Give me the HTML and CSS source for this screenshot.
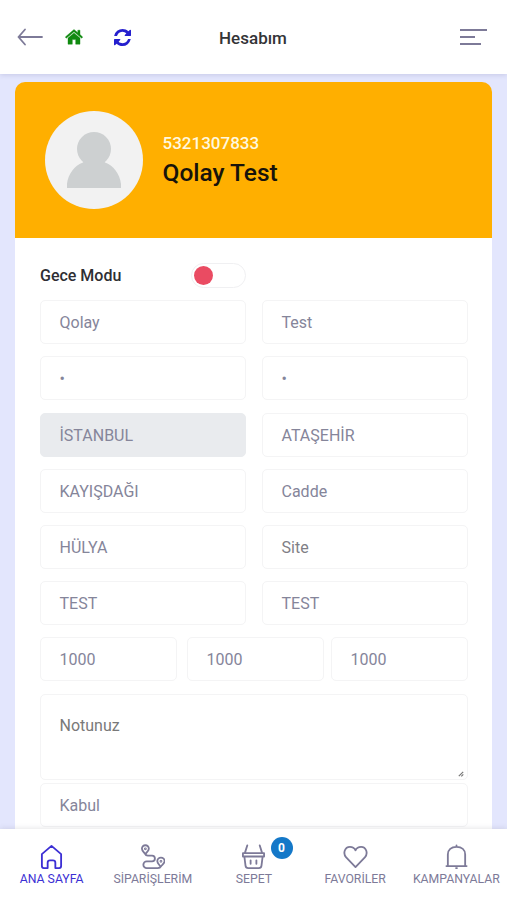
FILE: index.html
```html
<!DOCTYPE html>
<html lang="tr">
<head>
<meta charset="utf-8">
<meta name="viewport" content="width=device-width, initial-scale=1">
<title>Hesabım</title>
<link rel="stylesheet" href="styles.css">
</head>
<body>
<div class="app">
  <header class="topbar">
    <div class="topbar-actions">
      <svg class="icon-back" viewBox="0 0 26 18" fill="none" stroke="#7d7a98" stroke-width="1.800" stroke-linecap="round" stroke-linejoin="round"><path d="M25 9H1.500M8 1.500L1.500 9L8 16.500"/></svg>
      <svg class="icon-house" viewBox="0 0 18 16" fill="#108a10" stroke="#108a10" stroke-width=".4"><path d="M9 .5L.3 8l1 1.200L9 2.700l7.700 6.500 1-1.200-2.700-2.400V1.200h-2.200v2.500z"/><path d="M9 3.900L3 9v6.200h4.300v-4.600h3.400v4.600H15V9z"/></svg>
      <svg class="icon-sync" viewBox="0 0 1536 1536" fill="#251fce"><path d="M1511 928q0 5-1 7-64 268-268 434.500T764 1536q-146 0-282.500-55T238 1324l-129 129q-19 19-45 19t-45-19-19-45V960q0-26 19-45t45-19h448q26 0 45 19t19 45-19 45l-137 137q71 66 161 102t187 36q134 0 250-65t186-179q11-17 53-117 8-23 30-23h192q13 0 22.500 9.500t9.500 22.500zm25-800v448q0 26-19 45t-45 19h-448q-26 0-45-19t-19-45 19-45l138-138Q969 256 768 256q-134 0-250 65T332 500q-11 17-53 117-8 23-30 23H50q-13 0-22.500-9.500T18 608v-7q65-268 270-434.500T768 0q146 0 284 55.500T1297 212l130-129q19-19 45-19t45 19 19 45z"/></svg>
    </div>
    <h1 class="title">Hesabım</h1>
    <div class="menu"><i></i><i></i><i></i></div>
  </header>

  <main class="content">
    <section class="profile">
      <svg class="avatar" viewBox="0 0 98 98"><circle cx="49" cy="49" r="49" fill="#f2f2f2"/><circle cx="49" cy="38" r="17" fill="#cdd0d1"/><path d="M22 77V73C23 63 30 54 38 51.500L40 49H58L60 51.500C68 54 75 63 76 73V77Z" fill="#cdd0d1"/></svg>
      <div class="profile-text">
        <div class="phone">5321307833</div>
        <div class="name">Qolay Test</div>
      </div>
    </section>

    <section class="form">
      <div class="night"><span>Gece Modu</span><div class="switch"><i></i></div></div>
      <div class="pairs">
        <div class="field">Qolay</div><div class="field">Test</div>
        <div class="field">•</div><div class="field">•</div>
        <div class="field disabled">İSTANBUL</div><div class="field">ATAŞEHİR</div>
        <div class="field">KAYIŞDAĞI</div><div class="field">Cadde</div>
        <div class="field">HÜLYA</div><div class="field placeholder">Site</div>
        <div class="field">TEST</div><div class="field">TEST</div>
      </div>
      <div class="triple">
        <div class="field">1000</div><div class="field">1000</div><div class="field">1000</div>
      </div>
      <div class="note"><span>Notunuz</span><svg class="grip" viewBox="0 0 6 6" fill="none" stroke="#777" stroke-width="1.200"><path d="M.8 5.200L5.200.8M3.300 5.300L5.300 3.300"/></svg></div>
      <div class="field">Kabul</div>
    </section>
  </main>

  <nav class="tabs">
    <a class="tab active"><svg viewBox="0 0 26 26"><path d="M3 10.500L13 2L23 10.500V23Q23 25 21 25H17V19.500Q17 17 14.500 17H11.500Q9 17 9 19.500V25H5Q3 25 3 23Z"/></svg><span>ANA SAYFA</span></a>
    <a class="tab"><svg viewBox="0 0 26 26"><path d="M5.500 10.500C3.500 8 2 6.800 2 4.900a3.600 3.600 0 0 1 7.200 0C9.200 6.800 7.500 8 5.500 10.500ZM5.500 10.500Q6 12 8 12H12.500A3 3 0 0 1 12.500 18H7A3.500 3.500 0 0 0 7 25H18.500Q21 25 21.500 23.500C19.500 21 18 20 18 18a3.800 3.800 0 0 1 7.600 0C25.600 20 23.500 21 21.500 23.500"/><circle cx="5.600" cy="5" r=".5"/><circle cx="21.800" cy="18" r=".5"/></svg><span>SİPARİŞLERİM</span></a>
    <a class="tab"><svg viewBox="0 0 26 26"><path d="M2 9.500H24V13H2ZM3.500 13L4.700 22.500Q5 25 7.500 25H18.500Q21 25 21.300 22.500L22.500 13M6.500 1.500L4 9.500M19.500 1.500L22 9.500M10 17V20.500M16 17V20.500"/></svg><span>SEPET</span><b class="badge">0</b></a>
    <a class="tab"><svg viewBox="0 0 26 26"><path d="M13 24L3.300 14C-.5 9.500 2 3 7.200 3C10 3 12 4.500 13 6.500C14 4.500 16 3 18.800 3C24 3 26.500 9.500 22.700 14Z"/></svg><span>FAVORİLER</span></a>
    <a class="tab"><svg viewBox="0 0 26 26"><path d="M2.500 23H23.500M4 23V11C4 6 7.500 3 13 3C18.500 3 22 6 22 11V23M13 1.500V3M12.500 25H13.500"/></svg><span>KAMPANYALAR</span></a>
  </nav>
</div>
</body>
</html>
```
FILE: styles.css
```css
* { box-sizing: border-box; }
body {
  margin: 0;
  background: #e3e6fd;
  font-family: Roboto, "Liberation Sans", sans-serif;
}
svg { display: block; }
.app {
  height: 900px;
  display: flex;
  flex-direction: column;
  overflow: hidden;
}
.topbar {
  flex: none;
  height: 74px;
  padding: 0 20px 0 17px;
  display: grid;
  grid-template-columns: 1fr auto 1fr;
  align-items: center;
  background: #fff;
  box-shadow: 0 1px 5px rgba(70, 70, 130, .18);
}
.topbar-actions { display: flex; align-items: center; }
.icon-back { width: 26px; height: 18px; }
.icon-house { width: 18px; height: 16px; margin-left: 21.500px; }
.icon-sync { width: 17px; height: 17px; margin-left: 31px; }
.title {
  margin: 1px -1px 0 1px;
  color: #343437;
  font-size: 17px;
  line-height: 22px;
  font-weight: 500;
}
.menu { justify-self: end; width: 27px; display: grid; gap: 5px; }
.menu i { height: 2.300px; background: #7d7a98; }
.menu i:nth-child(2) { width: 15px; }
.menu i:nth-child(3) { width: 21px; }
.content { flex: 1; min-height: 0; margin: 7.500px 15px 0; overflow: hidden; }
.profile {
  height: 156.500px;
  padding-left: 30px;
  display: flex;
  align-items: center;
  gap: 19.500px;
  background: #ffaf00;
  border-radius: 10px 10px 0 0;
}
.avatar { width: 98px; height: 98px; }
.profile-text { padding-top: 2px; }
.phone { color: #fff8df; font-size: 17px; line-height: 24px; font-weight: 500; }
.name { color: #17130b; font-size: 24.500px; line-height: 36px; font-weight: 500; }
.form { height: 620px; padding: 24.500px 24px 0 25px; background: #fff; }
.night {
  height: 26px;
  display: flex;
  align-items: center;
  color: #2e2e33;
  font-size: 16px;
  font-weight: 500;
}
.night span { width: 150.500px; }
.switch {
  width: 55px;
  height: 25px;
  padding: 2px;
  border: 1px solid #f0f0f2;
  border-radius: 13px;
}
.switch i { display: block; width: 19px; height: 19px; border-radius: 50%; background: #ea4b62; }
.pairs {
  margin-top: 11.800px;
  display: grid;
  grid-template-columns: 206px 206px;
  justify-content: space-between;
  row-gap: 12.200px;
}
.field, .note {
  border: 1.500px solid #f4f4f5;
  border-radius: 5px;
  background: #fff;
  color: #85859a;
  font-size: 16px;
}
.field { height: 44px; padding: 0 18.500px; line-height: 44px; }
.disabled { background: #e9ebee; border-color: #e9ebee; }
.placeholder { color: #7f7f86; }
.triple { display: flex; margin-top: 12.200px; }
.triple .field { width: 137px; }
.triple .field:nth-child(2) { margin-left: 10px; }
.triple .field:nth-child(3) { margin-left: auto; }
.note {
  height: 86px;
  margin: 12.200px 0 3.500px;
  padding: 20px 3px 2px 18.500px;
  color: #797979;
  line-height: 22px;
  display: flex;
  justify-content: space-between;
}
.grip { width: 6px; height: 6px; align-self: flex-end; }
.tabs {
  z-index: 1;
  flex: none;
  height: 71.500px;
  padding-left: 1px;
  display: grid;
  grid-template-columns: repeat(5, 101.200px);
  background: #fff;
  box-shadow: 0 -1px 5px rgba(80, 80, 90, .13);
}
.tab {
  position: relative;
  padding-top: 15px;
  display: flex;
  flex-direction: column;
  align-items: center;
  color: #7d7a98;
  font-size: 12.250px;
  line-height: 16px;
  white-space: nowrap;
}
.tab svg {
  width: 25px;
  height: 25px;
  margin: 0 0 2px;
  fill: none;
  stroke: currentColor;
  stroke-width: 1.900;
  stroke-linecap: round;
  stroke-linejoin: round;
}
.active { color: #3c2fd4; }
.badge {
  position: absolute;
  top: 8.500px;
  right: 12px;
  width: 22px;
  height: 22px;
  border-radius: 50%;
  background: #1478c8;
  color: #fff;
  font-size: 12px;
  line-height: 22px;
  text-align: center;
}
```
